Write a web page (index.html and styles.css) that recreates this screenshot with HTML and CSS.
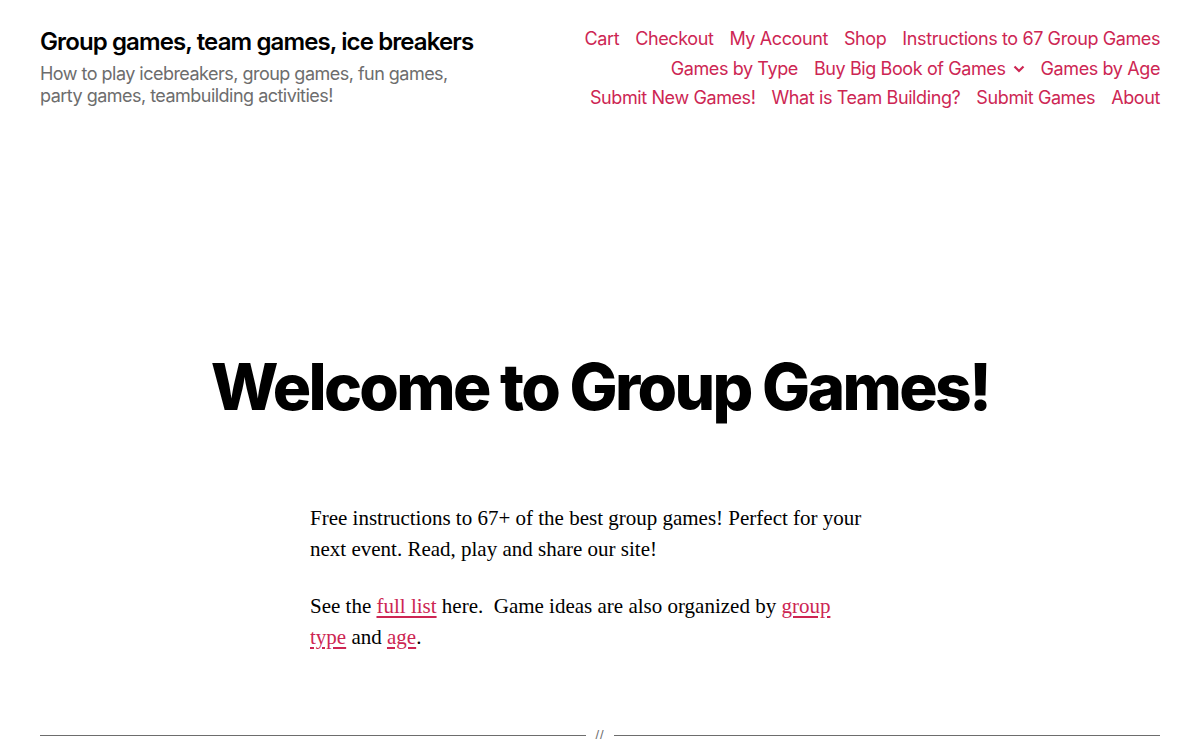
FILE: index.html
```html
<!DOCTYPE html>
<html lang="en">
<head>
<meta charset="utf-8">
<title>Group games, team games, ice breakers</title>
<link rel="stylesheet" href="styles.css">
</head>
<body>
<header class="site-header">
  <div class="branding">
    <div class="site-title">Group games, team games, ice breakers</div>
    <div class="site-desc">How to play icebreakers, group games, fun games, party games, teambuilding activities!</div>
  </div>
  <nav class="menu">
    <a href="#">Cart</a>
    <a href="#">Checkout</a>
    <a href="#">My Account</a>
    <a href="#">Shop</a>
    <a href="#">Instructions to 67 Group Games</a>
    <a href="#">Games by Type</a>
    <a href="#" class="has-sub">Buy Big Book of Games<svg class="chev" width="12" height="8" viewBox="0 0 12 8"><path d="M1.5 1.5 L6 6 L10.5 1.5" fill="none" stroke="currentColor" stroke-width="2.2"/></svg></a>
    <a href="#">Games by Age</a>
    <a href="#">Submit New Games!</a>
    <a href="#">What is Team Building?</a>
    <a href="#">Submit Games</a>
    <a href="#">About</a>
  </nav>
</header>
<main class="main">
  <h1 class="entry-title">Welcome to Group Games!</h1>
  <div class="entry-content">
    <p>Free instructions to 67+ of the best group games! Perfect for your next event. Read, play and share our site!</p>
    <p>See the <a href="#">full list</a> here.&nbsp; Game ideas are also organized by <a href="#">group type</a> and <a href="#">age</a>.</p>
  </div>
  <div class="separator"><span class="line"></span><span class="slashes">//</span><span class="line"></span></div>
</main>
</body>
</html>
```
FILE: styles.css
```css
* { box-sizing: border-box; }
body {
  margin: 0;
  background: #fff;
  color: #000;
  font-family: Inter, "Noto Sans", sans-serif;
}
.site-header {
  display: flex;
  justify-content: space-between;
  align-items: flex-start;
  padding: 27px 40px 0;
}
.branding { width: 460px; }
.site-title {
  font-size: 24px;
  font-weight: 600;
  letter-spacing: -0.037em;
  line-height: 30px;
}
.site-desc {
  margin-top: 6px;
  font-size: 18px;
  line-height: 21.5px;
  color: #6d6d6d;
  letter-spacing: -0.029em;
  width: 420px;
}
.menu {
  width: 590px;
  margin-top: 1px;
  display: flex;
  flex-wrap: wrap;
  justify-content: flex-end;
  column-gap: 16px;
  row-gap: 7px;
  font-size: 18px;
  line-height: 22.5px;
  letter-spacing: -0.022em;
}
.menu a {
  color: #cd2653;
  text-decoration: none;
  white-space: nowrap;
}
.has-sub { display: inline-flex; align-items: center; }
.chev { margin-left: 7px; margin-top: 1px; }
.main { padding-top: 240px; }
.entry-title {
  margin: 0;
  text-align: center;
  font-size: 64px;
  font-weight: 800;
  line-height: 73px;
  letter-spacing: -0.0415em;
}
.entry-content {
  width: 580px;
  padding-right: 22px;
  margin: 80px auto 0;
  font-family: "Liberation Serif", "Times New Roman", serif;
  font-size: 21px;
  line-height: 31px;
}
.entry-content p { margin: 0 0 26px; }
.entry-content a { color: #cd2653; text-decoration: underline; text-underline-offset: 3px; }
.separator {
  display: flex;
  align-items: center;
  margin: 76px 40px 0;
  color: #6d6d6d;
}
.line { flex: 1; height: 1px; background: #6d6d6d; }
.slashes {
  padding: 0 9px 2px;
  font-size: 13px;
  line-height: 11px;
  letter-spacing: 1px;
  font-family: "Liberation Sans", sans-serif;
}
```
